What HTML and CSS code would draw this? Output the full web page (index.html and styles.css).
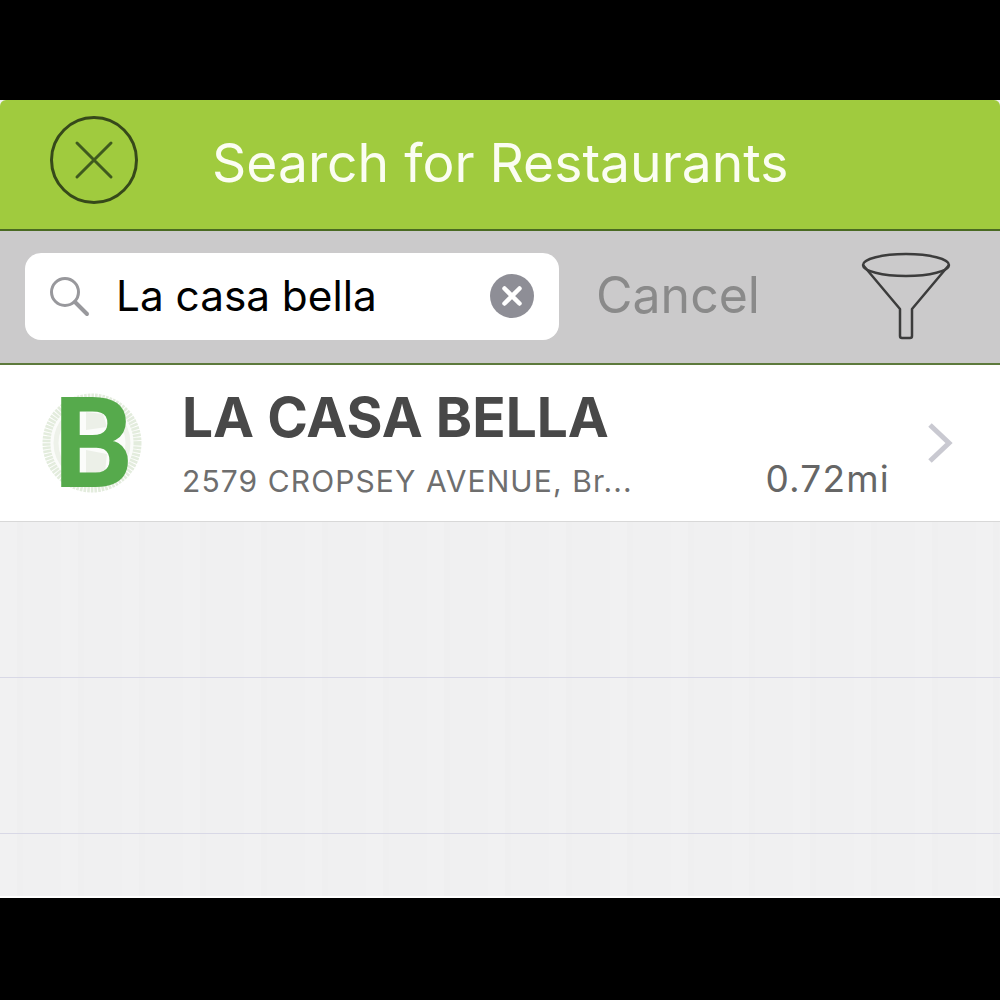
FILE: index.html
```html
<!DOCTYPE html>
<html lang="en">
<head>
    <meta charset="UTF-8">
    <title>Search for Restaurants</title>
    <link rel="stylesheet" href="styles.css">
</head>
<body>
    <div class="screen">
        <div class="nav-bar">
            <svg class="close-icon" width="90" height="90" viewBox="0 0 90 90">
                <circle cx="44" cy="44" r="42.5" fill="none" stroke="#36491a" stroke-width="3"/>
                <path d="M27 27L61 61M61 27L27 61" fill="none" stroke="#3f5a1e" stroke-width="3" stroke-linecap="round"/>
            </svg>
            <div class="nav-title">Search for Restaurants</div>
        </div>
        <div class="search-bar">
            <div class="search-field">
                <svg class="search-icon" width="42" height="42" viewBox="0 0 42 42">
                    <circle cx="17" cy="17" r="13.5" fill="none" stroke="#98989c" stroke-width="3"/>
                    <path d="M27 27L39 39" fill="none" stroke="#98989c" stroke-width="4" stroke-linecap="round"/>
                </svg>
                <span class="search-text">La casa bella</span>
                <svg class="clear-icon" width="44" height="44" viewBox="0 0 44 44">
                    <circle cx="22" cy="22" r="22" fill="#8e8e96"/>
                    <path d="M14.500 14.500L29.500 29.500M29.500 14.500L14.500 29.500" fill="none" stroke="#fff" stroke-width="4.500" stroke-linecap="round"/>
                </svg>
            </div>
            <span class="cancel">Cancel</span>
            <svg class="filter-icon" width="90" height="90" viewBox="0 0 90 90">
                <ellipse cx="45" cy="13" rx="43" ry="11" fill="none" stroke="#3c3c3c" stroke-width="2.500"/>
                <path d="M2 13L39 57V84Q39 86 41 86H49Q51 86 51 84V57L88 13" fill="none" stroke="#3c3c3c" stroke-width="2.500" stroke-linejoin="round"/>
            </svg>
        </div>
        <div class="result-row">
            <div class="grade">
                <svg class="seal" width="102" height="102" viewBox="0 0 102 102">
                    <circle cx="51" cy="51" r="45.500" fill="#fbfcfa" stroke="#e3ecdd" stroke-width="8" stroke-dasharray="2.500 1"/>
                    <circle cx="51" cy="51" r="36" fill="none" stroke="#eef2ea" stroke-width="5"/>
                    <path d="M45 20L62 22L66 35L45 38Z" fill="#ecf0e8"/>
                    <path d="M45 58L66 62L64 80L45 82Z" fill="#ecf0e8"/>
                </svg>
                <span class="grade-letter">B</span>
            </div>
            <div class="result-info">
                <div class="result-name">LA CASA BELLA</div>
                <div class="result-meta">
                    <span class="result-address">2579 CROPSEY AVENUE, Br...</span>
                    <span class="result-distance">0.72mi</span>
                </div>
            </div>
            <svg class="chevron" width="28" height="42" viewBox="0 0 28 42">
                <path d="M3 3L22 21L3 39" fill="none" stroke="#c9c9d1" stroke-width="5"/>
            </svg>
        </div>
        <div class="empty-row"></div>
        <div class="empty-row"></div>
        <div class="empty-row last"></div>
    </div>
</body>
</html>
```

FILE: styles.css
```css
body {
    margin: 0;
    height: 1000px;
    background-color: #000;
    font-family: Inter, "Liberation Sans", sans-serif;
    overflow: hidden;
}

.screen {
    margin-top: 100px;
    height: 798px;
    display: flex;
    flex-direction: column;
    background-color: #f0f0f1;
    background-image: repeating-linear-gradient(90deg, #f1f1f2 0, #f1f1f2 17px, #efeff0 17px, #efeff0 23px, #f0f0f1 23px, #f0f0f1 61px);
}

.nav-bar {
    height: 129px;
    flex-shrink: 0;
    display: flex;
    align-items: center;
    padding-left: 50px;
    background-color: #a0cb3e;
    border-bottom: 2px solid #4a6a22;
    border-radius: 6px 6px 0 0;
}

.close-icon {
    flex-shrink: 0;
    margin-bottom: 7px;
}

.nav-title {
    margin-left: 72px;
    margin-bottom: 4px;
    font-size: 53.400px;
    color: #fbfdf2;
}

.search-bar {
    height: 132px;
    flex-shrink: 0;
    display: flex;
    align-items: center;
    padding-left: 25px;
    background-color: #cbcacb;
    border-bottom: 2px solid #5d7a3c;
}

.search-field {
    width: 534px;
    height: 87px;
    flex-shrink: 0;
    display: flex;
    align-items: center;
    box-sizing: border-box;
    padding: 0 25px;
    margin-bottom: 2px;
    background-color: #fff;
    border-radius: 16px;
}

.search-icon {
    flex-shrink: 0;
    margin-left: -2px;
}

.search-text {
    margin-left: 26px;
    margin-bottom: 2px;
    flex: 1;
    font-size: 42.300px;
    color: #000;
}

.cancel {
    margin-left: 37px;
    margin-bottom: 4px;
    font-size: 50px;
    color: #8a8a8a;
}

.filter-icon {
    margin-left: 101px;
    flex-shrink: 0;
}

.result-row {
    height: 156px;
    flex-shrink: 0;
    display: flex;
    align-items: center;
    background-color: #fff;
    border-bottom: 1px solid #d8d8d8;
}

.grade {
    position: relative;
    width: 102px;
    height: 102px;
    margin-left: 41px;
    flex-shrink: 0;
    display: flex;
    align-items: center;
    justify-content: center;
}

.seal {
    position: absolute;
    top: 0;
    left: 0;
}

.grade-letter {
    position: relative;
    margin: 2px 0 0 3px;
    font-family: Roboto, sans-serif;
    font-weight: 700;
    font-size: 126px;
    line-height: 1;
    color: #56aa4c;
}

.result-info {
    margin: 0 0 2px 39px;
    width: 708px;
    flex-shrink: 0;
}

.result-name {
    margin-bottom: 6px;
    font-size: 55px;
    font-weight: 700;
    line-height: 66px;
    color: #484848;
}

.result-meta {
    display: flex;
    justify-content: space-between;
    align-items: baseline;
    font-size: 30px;
    letter-spacing: 1.100px;
    color: #6e6e6e;
}

.result-distance {
    font-size: 37px;
    letter-spacing: 1.200px;
    color: #666;
}

.chevron {
    margin-left: 37px;
    flex-shrink: 0;
}

.empty-row {
    height: 155px;
    flex-shrink: 0;
    border-bottom: 1px solid #d8d8e6;
}

.empty-row.last {
    flex: 1;
    border-bottom: 2px solid #fff;
}
```
